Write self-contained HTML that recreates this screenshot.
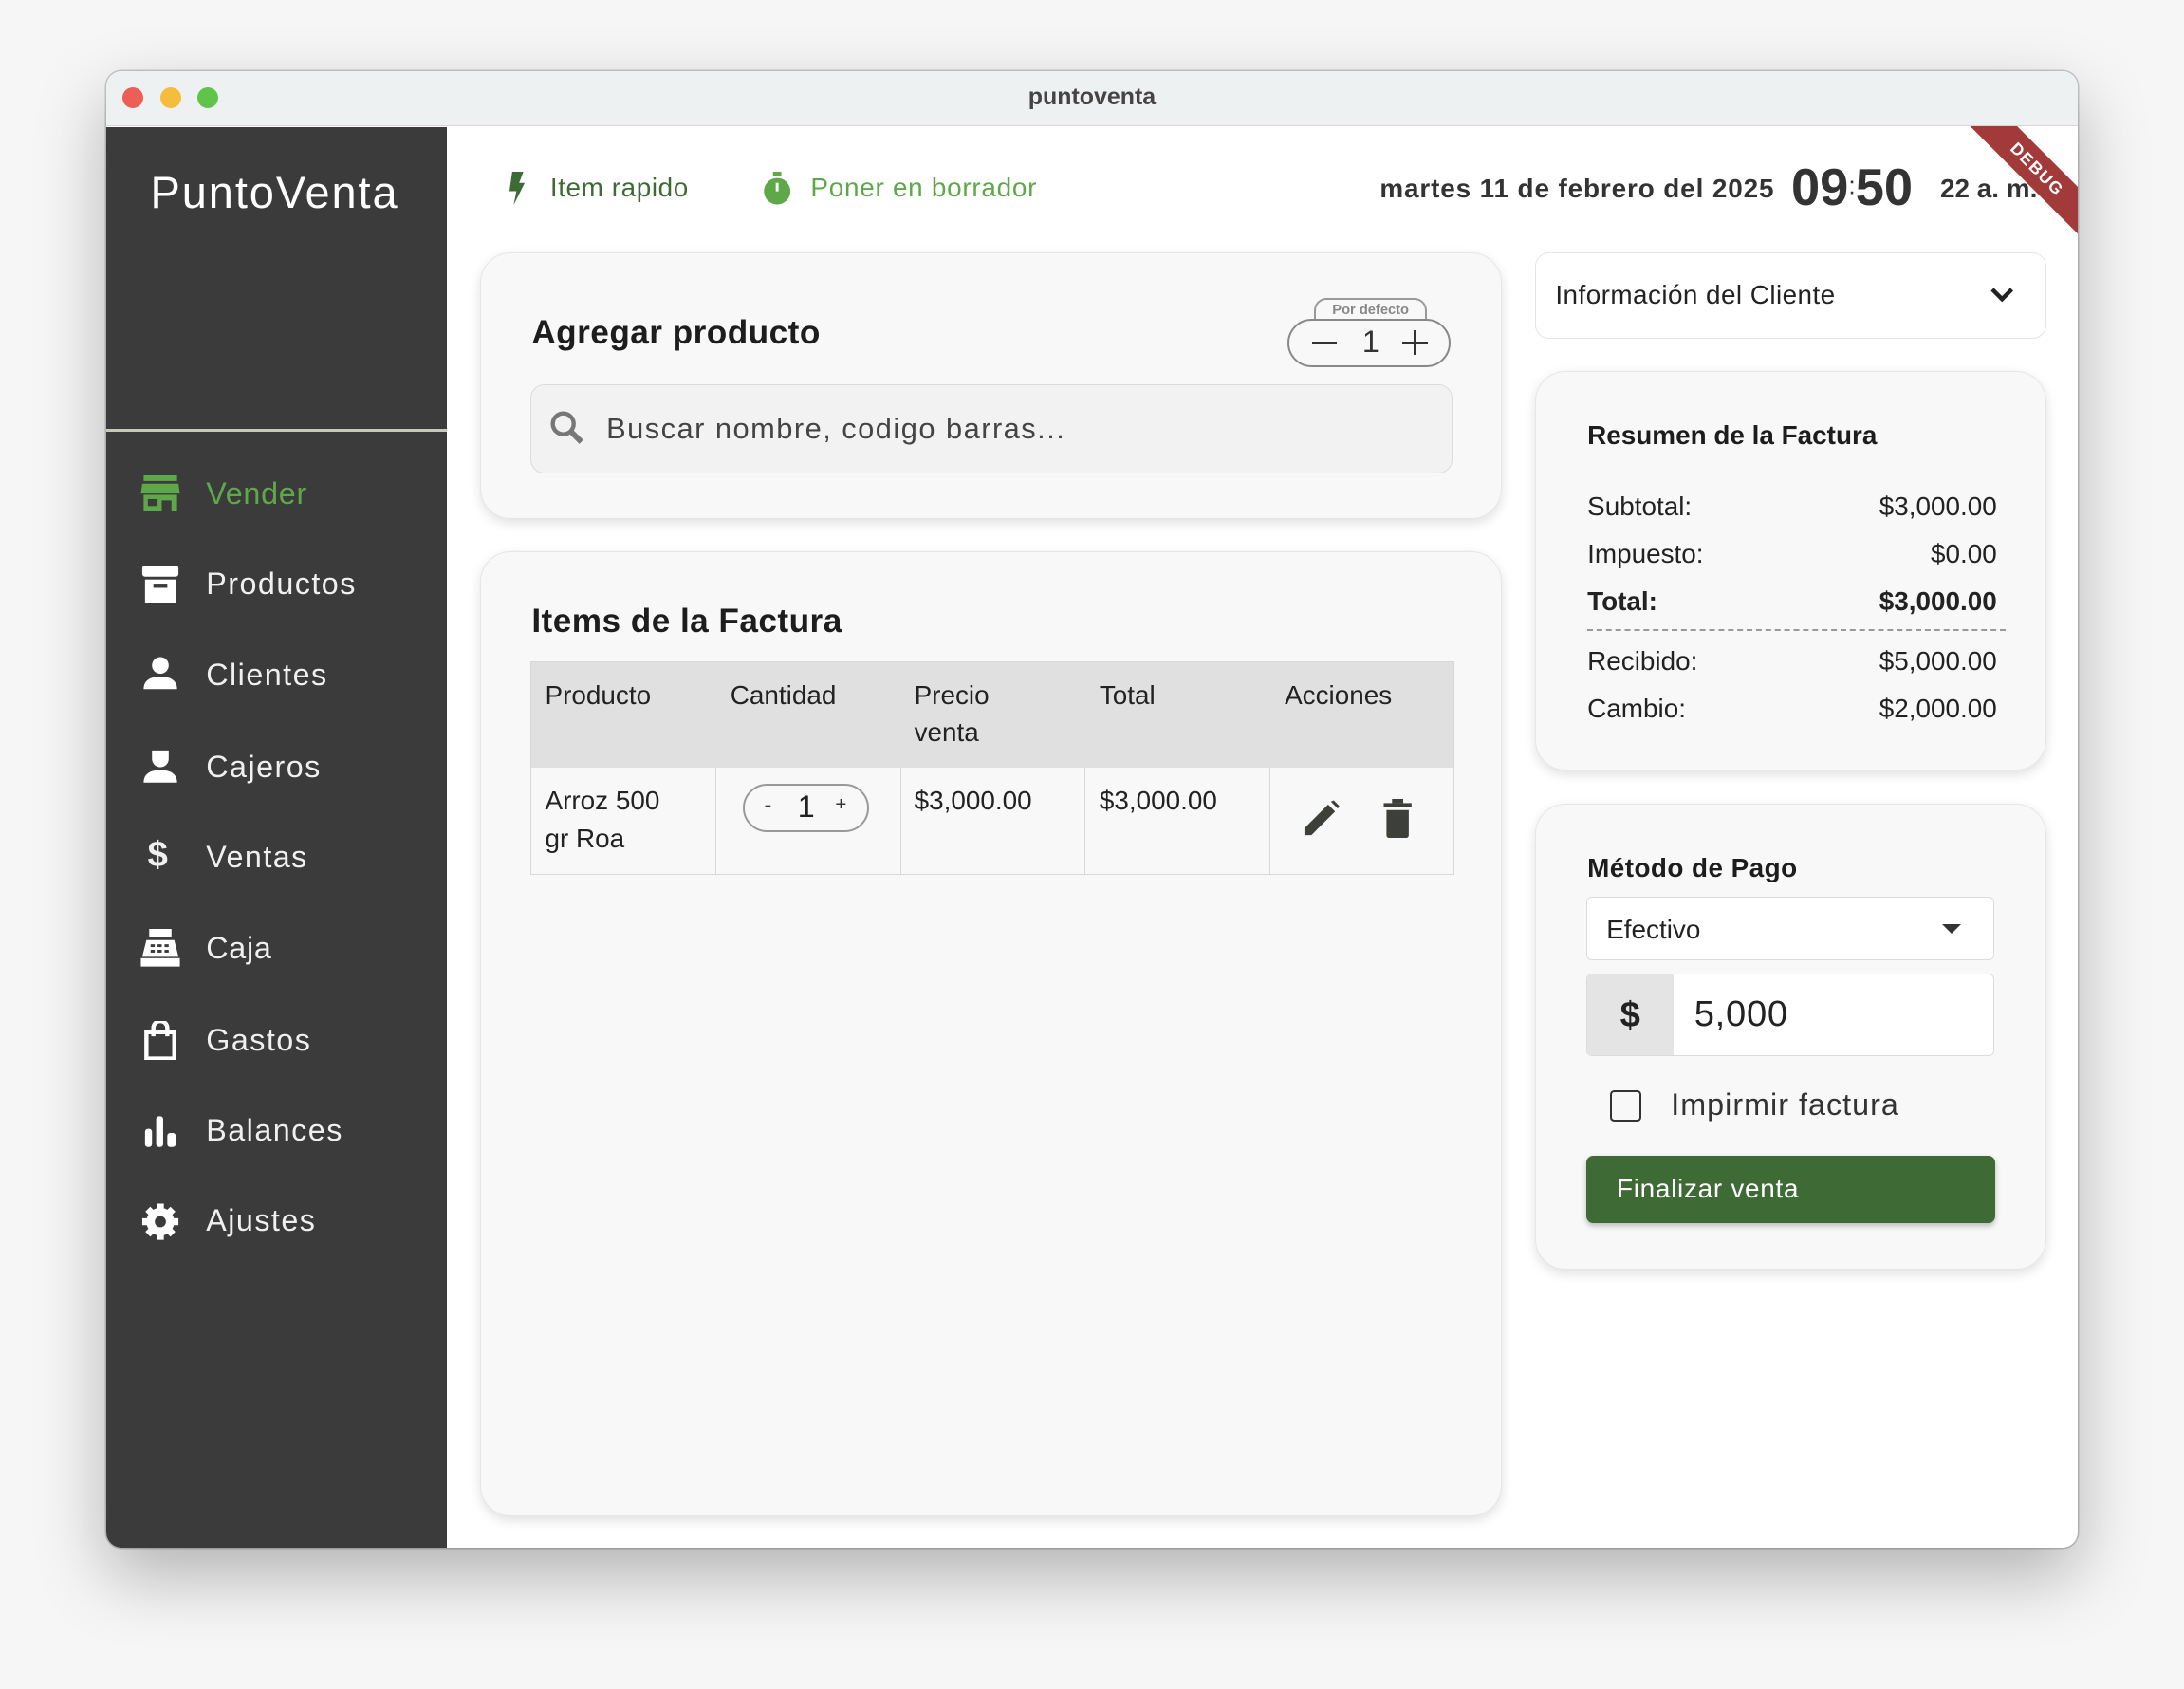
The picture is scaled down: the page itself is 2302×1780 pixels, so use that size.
<!DOCTYPE html>
<html><head><meta charset="utf-8">
<style>
html{zoom:1.4681}
body{margin:0;width:1568px;height:1212px;background:#f6f6f6;font-family:"Liberation Sans",sans-serif;position:relative;overflow:hidden;color:#222}
.a{position:absolute}
.win{left:76px;top:51px;width:1416px;height:1060px;border-radius:11px;background:#fff;overflow:hidden;box-shadow:0 20px 50px rgba(0,0,0,.28),0 0 0 1px #c8c8c8}
.tb{left:0;top:0;width:1416px;height:39px;background:#eef1f2;border-bottom:1px solid #d6d6d6;z-index:5}
.dot{width:15px;height:15px;border-radius:50%;top:12px}
.side{left:0;top:40px;width:245px;height:1020px;background:#3b3b3b}
.mi{left:0;width:245px;height:40px;font-size:22px;color:#f0f0f0;letter-spacing:.5px}
.mi span{position:absolute;left:72px;top:8px}
.mi svg{position:absolute;left:24px;top:7px}
.card{background:#f8f8f8;border:1px solid #e6e6e6;border-radius:22px;box-shadow:0 3px 8px rgba(0,0,0,.12)}
.h{font-weight:bold;color:#1d1d1d}
.cell{position:absolute;font-size:19px;color:#222;line-height:27px}
.row{position:absolute;left:37px;width:294px;font-size:19px;color:#222}
.row .v{position:absolute;right:0;top:0}
</style></head><body>
<div class="a win">
 <div class="a tb">
  <div class="a dot" style="left:12px;background:#ec5f56"></div>
  <div class="a dot" style="left:39px;background:#f4bd3b"></div>
  <div class="a dot" style="left:66px;background:#5fc54a"></div>
  <div class="a" style="left:0;width:1416px;text-align:center;top:9px;font-size:17px;font-weight:bold;color:#444">puntoventa</div>
 </div>
 <div class="a side">
  <div class="a" style="left:32px;top:28px;font-size:32px;color:#fff;letter-spacing:1.3px">PuntoVenta</div>
  <div class="a" style="left:0;top:217px;width:245px;height:2px;background:#c6cabd"></div>
  <div class="a mi" style="top:243px;color:#5ea84a"><svg width="30" height="26" viewBox="0 0 30 26"><rect x="3" y="0" width="24" height="4" fill="#5ea84a"/><path d="M2 6h26l1 7H1z" fill="#5ea84a"/><path d="M3 14h24v12h-4v-8h-7v8H3z" fill="#5ea84a"/><rect x="6" y="17" width="7" height="5" fill="#3b3b3b"/></svg><span>Vender</span></div>
  <div class="a mi" style="top:308px"><svg width="30" height="28" viewBox="0 0 30 28"><rect x="2" y="0" width="26" height="8" rx="2" fill="#fff"/><rect x="4" y="10" width="22" height="17" fill="#fff"/><rect x="10" y="13" width="10" height="3" fill="#3b3b3b"/></svg><span style="letter-spacing:1px">Productos</span></div>
  <div class="a mi" style="top:373px"><svg width="30" height="26" viewBox="0 0 30 26"><circle cx="15" cy="7" r="6" fill="#fff"/><path d="M3 24c0-7 6-9 12-9s12 2 12 9z" fill="#fff"/></svg><span style="letter-spacing:1px">Clientes</span></div>
  <div class="a mi" style="top:439px"><svg width="30" height="26" viewBox="0 0 30 26"><path d="M9 2h12v6a6 6 0 0 1-12 0z" fill="#fff"/><path d="M3 25c0-7 6-9 12-9s12 2 12 9z" fill="#fff"/></svg><span style="letter-spacing:1px">Cajeros</span></div>
  <div class="a mi" style="top:504px"><span style="left:30px;top:4px;font-weight:bold;font-size:26px">$</span><span style="letter-spacing:1px">Ventas</span></div>
  <div class="a mi" style="top:569px"><svg width="30" height="28" viewBox="0 0 30 28"><rect x="7" y="0" width="16" height="6" fill="#fff"/><path d="M5 8h20l3 12H2z" fill="#fff"/><rect x="1" y="21" width="28" height="6" fill="#fff"/><g fill="#3b3b3b"><rect x="8" y="11" width="3" height="2"/><rect x="13" y="11" width="3" height="2"/><rect x="18" y="11" width="3" height="2"/><rect x="8" y="15" width="3" height="2"/><rect x="13" y="15" width="3" height="2"/><rect x="18" y="15" width="3" height="2"/></g></svg><span>Caja</span></div>
  <div class="a mi" style="top:635px"><svg width="30" height="28" viewBox="0 0 30 28"><path d="M5 8h20v19H5z" fill="none" stroke="#fff" stroke-width="3"/><path d="M10 11V5a5 5 0 0 1 10 0v6" fill="none" stroke="#fff" stroke-width="3"/></svg><span style="letter-spacing:1px">Gastos</span></div>
  <div class="a mi" style="top:700px"><svg width="30" height="26" viewBox="0 0 30 26"><rect x="4" y="12" width="5" height="13" rx="2" fill="#fff"/><rect x="12" y="3" width="5" height="22" rx="2" fill="#fff"/><rect x="20" y="15" width="6" height="10" rx="2" fill="#fff"/></svg><span style="letter-spacing:1px">Balances</span></div>
  <div class="a mi" style="top:765px"><svg width="30" height="28" viewBox="0 0 30 28"><circle cx="15" cy="14" r="10" fill="#fff"/><g stroke="#fff" stroke-width="5"><path d="M15 1v26M2 14h26M6 5l18 18M24 5L6 23"/></g><circle cx="15" cy="14" r="4" fill="#3b3b3b"/></svg><span style="letter-spacing:1px">Ajustes</span></div>
 </div>
 <!-- top bar -->
 <svg class="a" style="left:288px;top:72px" width="14" height="24" viewBox="0 0 14 24"><path d="M4 0h8l-3 8h4L5 24l2-10H2z" fill="#3e6b35"/></svg>
 <div class="a" style="left:319px;top:73px;font-size:19px;color:#3e6b35;letter-spacing:.4px">Item rapido</div>
 <svg class="a" style="left:471px;top:72px" width="22" height="24" viewBox="0 0 22 24"><rect x="8" y="0" width="6" height="3" fill="#5ea84a"/><circle cx="11" cy="14" r="9.5" fill="#5ea84a"/><rect x="10" y="8" width="2" height="6" fill="#fff"/></svg>
 <div class="a" style="left:506px;top:73px;font-size:19px;color:#5ea84a;letter-spacing:.5px">Poner en borrador</div>
 <div class="a" style="right:218px;top:74px;font-size:19px;color:#333;font-weight:bold;letter-spacing:.6px">martes 11 de febrero del 2025</div>
 <div class="a" style="left:1210px;top:62px;font-size:37px;font-weight:bold;color:#333">09<span style="font-size:18px;font-weight:normal;vertical-align:8px">:</span>50</div>
 <div class="a" style="left:1317px;top:74px;font-size:19px;font-weight:bold;color:#333">22 a. m.</div>
 <div class="a" style="left:1316px;top:59px;width:140px;height:24px;background:#a33a3a;transform:rotate(45deg);color:#fff;font-size:12px;font-weight:bold;text-align:center;line-height:24px;letter-spacing:1px;z-index:4">DEBUG</div>
 <!-- card 1 -->
 <div class="a card" style="left:269px;top:130px;width:732px;height:190px">
  <div class="a h" style="left:36px;top:44px;font-size:24px;letter-spacing:.3px">Agregar producto</div>
  <div class="a" style="left:598px;top:32px;width:78px;height:18px;border:2px solid #999;border-bottom:none;border-radius:9px 9px 0 0;font-size:10px;color:#888;text-align:center;line-height:16px;font-weight:bold">Por defecto</div>
  <div class="a" style="left:579px;top:47px;width:114px;height:32px;border:2px solid #888;border-radius:18px;background:#f8f8f8;font-size:22px;color:#333">
   <div class="a" style="left:16px;top:15px;width:18px;height:2px;background:#333"></div>
   <div class="a" style="left:52px;top:3px">1</div>
   <div class="a" style="left:81px;top:15px;width:18px;height:2px;background:#333"></div>
   <div class="a" style="left:89px;top:7px;width:2px;height:18px;background:#333"></div>
  </div>
  <div class="a" style="left:35px;top:94px;width:661px;height:63px;background:#f2f2f2;border:1px solid #dcdcdc;border-radius:10px">
   <svg class="a" style="left:13px;top:18px" width="26" height="26" viewBox="0 0 26 26"><circle cx="10" cy="10" r="7.5" fill="none" stroke="#777" stroke-width="3"/><path d="M15 15l8 8" stroke="#777" stroke-width="4"/></svg>
   <div class="a" style="left:54px;top:19px;font-size:21px;color:#444;letter-spacing:1px">Buscar nombre, codigo barras...</div>
  </div>
 </div>
 <!-- card 2 -->
 <div class="a card" style="left:269px;top:345px;width:732px;height:691px">
  <div class="a h" style="left:36px;top:36px;font-size:24px;letter-spacing:.3px">Items de la Factura</div>
  <div class="a" style="left:35px;top:78px;width:662px;height:152px;border:1px solid #d8d8d8;background:#f8f8f8">
   <div class="a" style="left:0;top:0;width:662px;height:76px;background:#e0e0e0"></div>
   <div class="a" style="left:132px;top:76px;width:1px;height:76px;background:#d8d8d8"></div>
   <div class="a" style="left:265px;top:76px;width:1px;height:76px;background:#d8d8d8"></div>
   <div class="a" style="left:397px;top:76px;width:1px;height:76px;background:#d8d8d8"></div>
   <div class="a" style="left:530px;top:76px;width:1px;height:76px;background:#d8d8d8"></div>
   <div class="cell" style="left:10px;top:10px">Producto</div>
   <div class="cell" style="left:143px;top:10px">Cantidad</div>
   <div class="cell" style="left:275px;top:10px">Precio<br>venta</div>
   <div class="cell" style="left:408px;top:10px">Total</div>
   <div class="cell" style="left:541px;top:10px">Acciones</div>
   <div class="cell" style="left:10px;top:86px">Arroz 500<br>gr Roa</div>
   <div class="a" style="left:152px;top:87px;width:88px;height:32px;border:2px solid #999;border-radius:18px">
    <div class="a" style="left:14px;top:5px;font-size:16px;color:#333">-</div>
    <div class="a" style="left:38px;top:3px;font-size:22px;color:#222">1</div>
    <div class="a" style="left:65px;top:6px;font-size:14px;color:#333">+</div>
   </div>
   <div class="cell" style="left:275px;top:86px">$3,000.00</div>
   <div class="cell" style="left:408px;top:86px">$3,000.00</div>
   <svg class="a" style="left:553px;top:98px" width="28" height="28" viewBox="0 0 28 28"><path d="M2 26v-5L19 4l5 5L7 26z" fill="#3c3f3a"/><path d="M21 2l2-1 4 4-1 2z" fill="#3c3f3a"/></svg>
   <svg class="a" style="left:611px;top:98px" width="22" height="28" viewBox="0 0 22 28"><rect x="1" y="3" width="20" height="3" fill="#3c3f3a"/><rect x="7" y="0" width="8" height="3" fill="#3c3f3a"/><path d="M3 8h16v18a2 2 0 0 1-2 2H5a2 2 0 0 1-2-2z" fill="#3c3f3a"/></svg>
  </div>
 </div>
 <!-- right -->
 <div class="a" style="left:1026px;top:130px;width:366px;height:61px;background:#fff;border:1px solid #e4e4e4;border-radius:10px">
  <div class="a" style="left:14px;top:19px;font-size:19px;color:#222;letter-spacing:.3px">Información del Cliente</div>
  <svg class="a" style="left:326px;top:24px" width="18" height="12" viewBox="0 0 18 12"><path d="M2 2l7 7 7-7" fill="none" stroke="#222" stroke-width="3"/></svg>
 </div>
 <div class="a card" style="left:1026px;top:215px;width:366px;height:286px">
  <div class="a h" style="left:37px;top:35px;font-size:19px">Resumen de la Factura</div>
  <div class="row" style="top:86px">Subtotal:<span class="v">$3,000.00</span></div>
  <div class="row" style="top:120px">Impuesto:<span class="v">$0.00</span></div>
  <div class="row" style="top:154px;font-weight:bold">Total:<span class="v">$3,000.00</span></div>
  <div class="a" style="left:37px;top:185px;width:300px;border-top:2px dashed #999"></div>
  <div class="row" style="top:197px">Recibido:<span class="v">$5,000.00</span></div>
  <div class="row" style="top:231px">Cambio:<span class="v">$2,000.00</span></div>
 </div>
 <div class="a card" style="left:1026px;top:526px;width:366px;height:333px">
  <div class="a h" style="left:37px;top:35px;font-size:19px;letter-spacing:.3px">Método de Pago</div>
  <div class="a" style="left:36px;top:66px;width:292px;height:44px;background:#fff;border:1px solid #dcdcdc;border-radius:4px">
   <div class="a" style="left:14px;top:12px;font-size:19px;color:#222">Efectivo</div>
   <div class="a" style="left:255px;top:19px;width:0;height:0;border-left:7px solid transparent;border-right:7px solid transparent;border-top:7px solid #333"></div>
  </div>
  <div class="a" style="left:36px;top:121px;width:292px;height:58px;background:#fff;border:1px solid #dcdcdc;border-radius:4px;overflow:hidden">
   <div class="a" style="left:0;top:0;width:62px;height:58px;background:#e4e4e4;font-size:26px;font-weight:bold;text-align:center;line-height:58px;color:#222">$</div>
   <div class="a" style="left:77px;top:14px;font-size:26px;color:#222;letter-spacing:.5px">5,000</div>
  </div>
  <div class="a" style="left:53px;top:205px;width:20px;height:20px;border:2px solid #333;border-radius:3px"></div>
  <div class="a" style="left:97px;top:203px;font-size:22px;color:#333;letter-spacing:.7px">Impirmir factura</div>
  <div class="a" style="left:36px;top:252px;width:294px;height:48px;background:#3e6b35;border-radius:5px;box-shadow:0 2px 4px rgba(0,0,0,.25)">
   <div class="a" style="left:22px;top:13px;font-size:19px;color:#fff;letter-spacing:.5px">Finalizar venta</div>
  </div>
 </div>
</div>
</body></html>
